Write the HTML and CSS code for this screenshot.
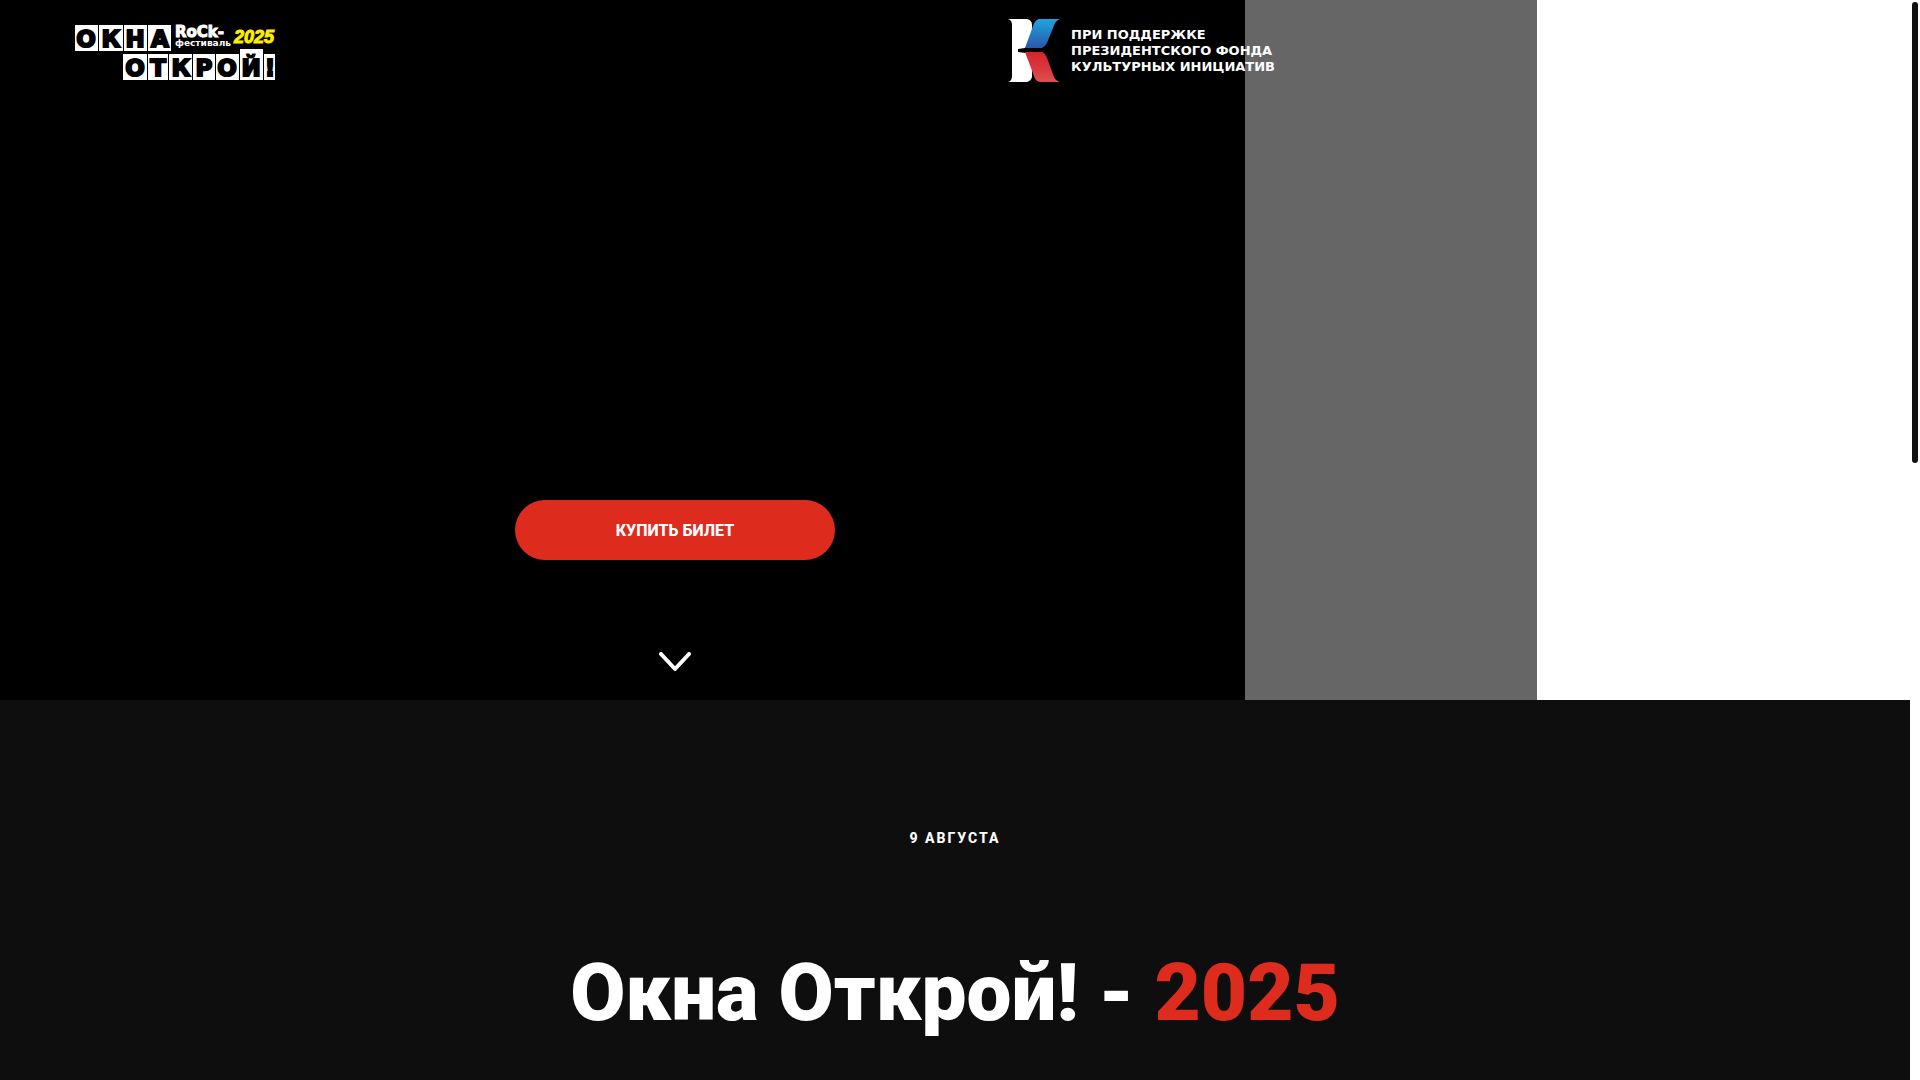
FILE: index.html
```html
<!DOCTYPE html>
<html lang="ru">
<head>
    <meta charset="UTF-8">
    <meta name="viewport" content="width=device-width, initial-scale=1.0">
    <title>Окна Открой! - 2025</title>
    <link rel="stylesheet" href="styles.css">
</head>

<body>
    <main class="page">
        <!-- Первый экран -->
        <section class="hero">
            <div class="hero-content">
                <header class="header">
                    <a href="#" class="logo">
                        <svg width="200" height="55" viewBox="0 0 200 55" role="img" aria-label="Окна Открой! Rock-фестиваль 2025">
                            <g fill="#fff">
                                <rect x="0" y="0" width="23" height="26"/>
                                <rect x="24" y="0" width="24" height="26"/>
                                <rect x="49" y="0" width="23" height="26"/>
                                <rect x="73" y="0" width="23" height="26"/>
                                <rect x="48" y="29" width="24" height="26"/>
                                <rect x="73" y="29" width="20" height="26"/>
                                <rect x="94" y="29" width="23" height="26"/>
                                <rect x="118" y="29" width="22" height="26"/>
                                <rect x="141" y="29" width="23" height="26"/>
                                <rect x="165" y="24" width="23" height="31"/>
                                <rect x="189" y="29" width="11" height="26"/>
                            </g>
                            <g class="logo-tile">
                                <text x="11" y="22">О</text>
                                <text x="36" y="22">К</text>
                                <text x="60" y="22">Н</text>
                                <text x="85" y="22">А</text>
                                <text x="60" y="51">О</text>
                                <text x="83" y="51">Т</text>
                                <text x="106" y="51">К</text>
                                <text x="129" y="51">Р</text>
                                <text x="152" y="51">О</text>
                                <text x="176" y="51">Й</text>
                                <text x="195" y="51">!</text>
                            </g>
                            <text class="logo-rock" x="100" y="12">RoCk-</text>
                            <text class="logo-fest" x="100" y="21">фестиваль</text>
                            <text class="logo-year" x="159" y="18">2025</text>
                        </svg>
                    </a>
                    <a href="#" class="sponsor">
                        <svg width="52" height="64" viewBox="0 0 52 64" aria-hidden="true">
                            <defs>
                                <linearGradient id="blue" x1="0" y1="0" x2="0" y2="1">
                                    <stop offset="0" stop-color="#1fa4e0"/>
                                    <stop offset="1" stop-color="#2c58a8"/>
                                </linearGradient>
                                <linearGradient id="red" x1="0" y1="0" x2="0" y2="1">
                                    <stop offset="0" stop-color="#d9232e"/>
                                    <stop offset="0.6" stop-color="#d83a40"/>
                                    <stop offset="1" stop-color="#e0504f"/>
                                </linearGradient>
                            </defs>
                            <path fill="#fff" d="M0 0H19Q24 1 24 6V14Q23 23 17 29L10 30V33L18 34Q24 40 24 49V58Q23 62 19 63H0Q4 62 4 57V6Q4 1 0 0Z"/>
                            <path fill="url(#blue)" d="M52 0H31Q27 1 25 7L17 29H34Q37 28 39 24L47 4Q49 1 52 0Z"/>
                            <path fill="url(#red)" d="M52 63H32Q27 62 26 57L17 33H34Q37 34 39 39L46 58Q48 62 52 63Z"/>
                        </svg>
                        <span class="sponsor-text">ПРИ ПОДДЕРЖКЕ<br>ПРЕЗИДЕНТСКОГО ФОНДА<br>КУЛЬТУРНЫХ ИНИЦИАТИВ</span>
                    </a>
                </header>

                <div class="hero-actions">
                    <button type="button" class="btn-ticket">КУПИТЬ БИЛЕТ</button>
                    <a href="#about" class="arrow" aria-label="Вниз">
                        <svg width="32" height="20" viewBox="0 0 32 20">
                            <path d="M2 2L16 17L30 2" fill="none" stroke="#fff" stroke-width="4" stroke-linecap="round" stroke-linejoin="round"/>
                        </svg>
                    </a>
                </div>
            </div>
        </section>

        <!-- О фестивале -->
        <section class="about" id="about">
            <p class="about-date">9 АВГУСТА</p>
            <h1 class="about-title">Окна Открой! - <span class="accent">2025</span></h1>
        </section>
    </main>

    <div class="scroll-thumb"></div>
</body>
</html>
```
FILE: styles.css
```css
* {
    box-sizing: border-box;
}

html {
    scrollbar-width: none;
}

body {
    margin: 0;
    padding-right: 10px;
    background: #fff;
    font-family: Roboto, "Open Sans", sans-serif;
}

.page {
    display: flex;
    flex-direction: column;
    min-height: 100vh;
}

/* Первый экран */
.hero {
    background: linear-gradient(90deg, #000 65.2%, #666 65.2%, #666 80.47%, #fff 80.47%);
}

.hero-content {
    display: flex;
    flex-direction: column;
    justify-content: space-between;
    max-width: 1350px;
    min-height: 700px;
    padding: 19px 75px 28px;
}

.header {
    display: flex;
    justify-content: space-between;
    align-items: flex-start;
}

.logo {
    margin-top: 6px;
}

.logo svg,
.sponsor svg,
.arrow svg {
    display: block;
}

.logo svg {
    overflow: visible;
}

.logo-tile {
    font-family: "DejaVu Sans", sans-serif;
    font-size: 23px;
    font-weight: bold;
    text-anchor: middle;
    fill: #000;
    stroke: #000;
    stroke-width: 2px;
}

.logo-rock,
.logo-fest {
    font-family: "DejaVu Sans", sans-serif;
    font-weight: bold;
    fill: #fff;
}

.logo-rock {
    font-size: 15px;
    stroke: #fff;
    stroke-width: 1px;
}

.logo-fest {
    font-size: 9px;
}

.logo-year {
    font-family: "Liberation Sans", sans-serif;
    font-size: 18px;
    font-weight: bold;
    font-style: italic;
    fill: #ffed00;
    stroke: #ffed00;
    stroke-width: 1px;
}

.sponsor {
    display: flex;
    align-items: center;
    gap: 11px;
    color: #fff;
    text-decoration: none;
}

.sponsor-text {
    font-family: "DejaVu Sans", sans-serif;
    font-size: 13px;
    font-weight: 700;
    line-height: 16px;
    white-space: nowrap;
}

.hero-actions {
    display: flex;
    flex-direction: column;
    align-items: center;
    gap: 92px;
}

.btn-ticket {
    width: 320px;
    height: 60px;
    border: none;
    border-radius: 30px;
    background: #dd2c1e;
    color: #fff;
    font-family: inherit;
    font-size: 16px;
    font-weight: 800;
    cursor: pointer;
}

/* О фестивале */
.about {
    flex: 1;
    padding: 128px 20px 36px;
    background: #0e0e0e;
    color: #fff;
    text-align: center;
}

.about-date {
    margin: 0 0 95px;
    font-size: 14px;
    font-weight: 800;
    line-height: 20px;
    letter-spacing: 2px;
}

.about-title {
    margin: 0;
    font-size: 80px;
    font-weight: 900;
    line-height: 100px;
}

.accent {
    color: #dd2c1e;
}

/* Полоса прокрутки */
.scroll-thumb {
    position: fixed;
    top: 2px;
    right: 2px;
    width: 6px;
    height: 461px;
    border-radius: 3px;
    background: #111;
}
```
